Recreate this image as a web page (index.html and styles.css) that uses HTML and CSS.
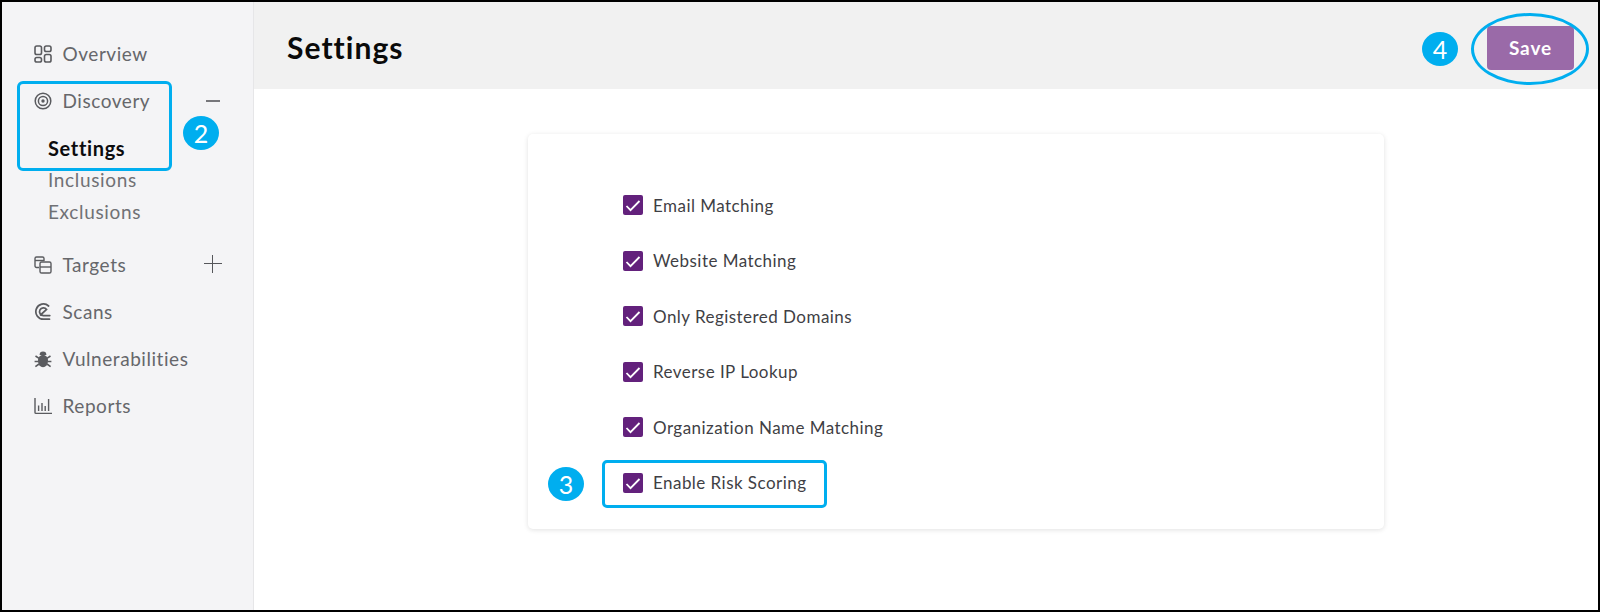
FILE: index.html
```html
<!DOCTYPE html>
<html lang="en">
<head>
<meta charset="utf-8">
<title>Settings</title>
<link rel="stylesheet" href="styles.css">
</head>
<body>
<div class="frame">
  <aside class="sidebar">
    <nav class="nav">
      <div class="nav-item">
        <svg class="icon" viewBox="0 0 18 18" fill="none" stroke="currentColor" stroke-width="1.6"><rect x="1" y="1" width="6.5" height="8.5" rx="1.8"/><rect x="10.5" y="1" width="6.5" height="5.5" rx="1.8"/><rect x="1" y="12.5" width="6.5" height="4.5" rx="1.8"/><rect x="10.5" y="9.5" width="6.5" height="7.5" rx="1.8"/></svg>
        <span>Overview</span>
      </div>
      <div class="nav-item">
        <svg class="icon" viewBox="0 0 18 18" fill="none" stroke="currentColor" stroke-width="1.5"><circle cx="9" cy="9" r="7.8"/><circle cx="9" cy="9" r="4.6"/><circle cx="9" cy="9" r="1.7" fill="currentColor" stroke="none"/></svg>
        <span>Discovery</span>
        <span class="toggle minus"></span>
      </div>
      <div class="sub">
        <div class="sub-item active">Settings</div>
        <div class="sub-item">Inclusions</div>
        <div class="sub-item">Exclusions</div>
      </div>
      <div class="nav-item">
        <svg class="icon" viewBox="0 0 18 18" fill="none" stroke="currentColor" stroke-width="1.4"><path d="M5 11.5H2.5A1.5 1.5 0 0 1 1 10V2.5A1.5 1.5 0 0 1 2.5 1h6A1.5 1.5 0 0 1 10 2.5V5"/><path d="M1 4.5h9"/><rect x="6" y="6" width="11" height="11" rx="1.6"/><path d="M6 11h11"/></svg>
        <span>Targets</span>
        <span class="toggle plus"></span>
      </div>
      <div class="nav-item">
        <svg class="icon" viewBox="0 0 18 18" fill="none" stroke="currentColor" stroke-width="1.7" stroke-linecap="round"><path d="M15.5 16.2H9.5A7.6 7.6 0 1 1 14.6 3"/><path d="M15.8 12.6H9.5A3.9 3.9 0 1 1 12.6 6.4L6.5 12"/></svg>
        <span>Scans</span>
      </div>
      <div class="nav-item">
        <svg class="icon" viewBox="0 0 18 18" fill="currentColor" stroke="currentColor" stroke-width="1.6"><ellipse cx="9" cy="11" rx="5" ry="6.2" stroke="none"/><path d="M5.6 5a3.4 3.4 0 0 1 6.8 0z" stroke="none"/><path d="M1.5 6l3.6 2.4M16.5 6l-3.6 2.4M.6 11.5h4M17.4 11.5h-4M1.4 16.6l3.6-2.6M16.6 16.6L13 14" fill="none"/></svg>
        <span>Vulnerabilities</span>
      </div>
      <div class="nav-item">
        <svg class="icon" viewBox="0 0 18 18" fill="none" stroke="currentColor" stroke-width="1.4"><path d="M1 1v14.4a1 1 0 0 0 1 1h16"/><path d="M4.6 8.5v5.5M8 6v8M11.2 9v5M14.6 2v12"/></svg>
        <span>Reports</span>
      </div>
    </nav>
  </aside>
  <main class="main">
    <header class="topbar">
      <h1 class="title">Settings</h1>
      <button class="save">Save</button>
    </header>
    <section class="content">
      <div class="card">
        <label class="check"><span class="box"><svg viewBox="0 0 20 20" fill="none" stroke="#fff" stroke-width="1.8"><path d="M3.5 11l4 4.2 9-9.2"/></svg></span>Email Matching</label>
        <label class="check"><span class="box"><svg viewBox="0 0 20 20" fill="none" stroke="#fff" stroke-width="1.8"><path d="M3.5 11l4 4.2 9-9.2"/></svg></span>Website Matching</label>
        <label class="check"><span class="box"><svg viewBox="0 0 20 20" fill="none" stroke="#fff" stroke-width="1.8"><path d="M3.5 11l4 4.2 9-9.2"/></svg></span>Only Registered Domains</label>
        <label class="check"><span class="box"><svg viewBox="0 0 20 20" fill="none" stroke="#fff" stroke-width="1.8"><path d="M3.5 11l4 4.2 9-9.2"/></svg></span>Reverse IP Lookup</label>
        <label class="check"><span class="box"><svg viewBox="0 0 20 20" fill="none" stroke="#fff" stroke-width="1.8"><path d="M3.5 11l4 4.2 9-9.2"/></svg></span>Organization Name Matching</label>
        <label class="check"><span class="box"><svg viewBox="0 0 20 20" fill="none" stroke="#fff" stroke-width="1.8"><path d="M3.5 11l4 4.2 9-9.2"/></svg></span>Enable Risk Scoring</label>
      </div>
    </section>
  </main>
  <div class="mark rect-discovery"></div>
  <div class="mark rect-risk"></div>
  <div class="mark ellipse-save"></div>
  <div class="badge badge-2">2</div>
  <div class="badge badge-3">3</div>
  <div class="badge badge-4">4</div>
</div>
</body>
</html>
```

FILE: styles.css
```css
* { box-sizing: border-box; }
html, body { margin: 0; padding: 0; }
body {
  font-family: "Lato", "Liberation Sans", sans-serif;
  background: #fff;
  color: #333;
}
.frame {
  position: relative;
  display: flex;
  width: 1600px;
  height: 612px;
  border: 2px solid #000;
  overflow: hidden;
}
.sidebar {
  width: 252px;
  flex: none;
  background: #f4f4f6;
  border-right: 1px solid #e6e6e8;
  padding-top: 28px;
}
.nav { display: flex; flex-direction: column; }
.nav-item {
  position: relative;
  display: flex;
  align-items: center;
  height: 47px;
  padding-left: 32px;
  font-size: 19px;
  letter-spacing: 0.55px;
  color: #66676b;
}
.icon { width: 18px; height: 18px; margin-right: 10.5px; flex: none; color: #5a5b5f; }
.toggle { position: absolute; }
.minus { left: 204px; top: 23px; width: 14px; height: 1.5px; background: #77777b; }
.plus { left: 202px; top: 14px; width: 18px; height: 18px;
  background:
    linear-gradient(#55565a, #55565a) center / 18px 1.4px no-repeat,
    linear-gradient(#55565a, #55565a) center / 1.4px 18px no-repeat;
}
.sub { display: flex; flex-direction: column; padding: 8px 0 13px 46px; }
.sub-item {
  height: 32px;
  line-height: 32px;
  font-size: 19px;
  letter-spacing: 0.65px;
  color: #707175;
}
.sub-item.active { font-size: 20px; letter-spacing: 0.65px; font-weight: 700; color: #0c0c0e; }
.main { flex: 1; display: flex; flex-direction: column; min-width: 0; }
.topbar {
  display: flex;
  align-items: center;
  justify-content: space-between;
  height: 87px;
  flex: none;
  background: #f1f1f1;
  padding: 0 24px 0 33px;
}
.title { margin: 2px 0 0; font-size: 30px; font-weight: 700; letter-spacing: 1.05px; color: #0a0a0a; }
.save {
  width: 87px;
  height: 44px;
  margin-top: 4px;
  border: 0;
  border-radius: 4px;
  background: #9a6aa8;
  color: #fff;
  font: 700 19px "Lato", "Liberation Sans", sans-serif;
  letter-spacing: 0.9px;
}
.content { flex: 1; padding: 45px 0 0 274px; }
.card {
  width: 856px;
  height: 395px;
  background: #fff;
  border-radius: 5px;
  box-shadow: 0 1px 5px rgba(0, 0, 0, 0.12);
  padding: 61px 0 0 95px;
  display: flex;
  flex-direction: column;
  gap: 35.5px;
}
.check {
  display: flex;
  align-items: center;
  height: 20px;
  font-size: 17px;
  letter-spacing: 0.46px;
  color: #3f3f45;
}
.box {
  width: 20px;
  height: 20px;
  margin-right: 10px;
  border-radius: 2px;
  background: #63217c;
  flex: none;
  display: flex;
}
.box svg { width: 20px; height: 20px; }
.mark { position: absolute; border: 3px solid #00aeef; }
.rect-discovery { left: 15px; top: 79px; width: 155px; height: 90px; border-radius: 6px; }
.rect-risk { left: 600px; top: 458px; width: 225px; height: 48px; border-radius: 5px; }
.ellipse-save { left: 1469px; top: 11px; width: 118px; height: 72px; border-radius: 50%; }
.badge {
  position: absolute;
  width: 36px;
  height: 34px;
  border-radius: 50%;
  background: #00aeef;
  color: #fff;
  font-size: 25px;
  line-height: 34px;
  text-align: center;
}
.badge-2 { left: 181px; top: 114px; }
.badge-3 { left: 546px; top: 465px; }
.badge-4 { left: 1420px; top: 30px; }
```
